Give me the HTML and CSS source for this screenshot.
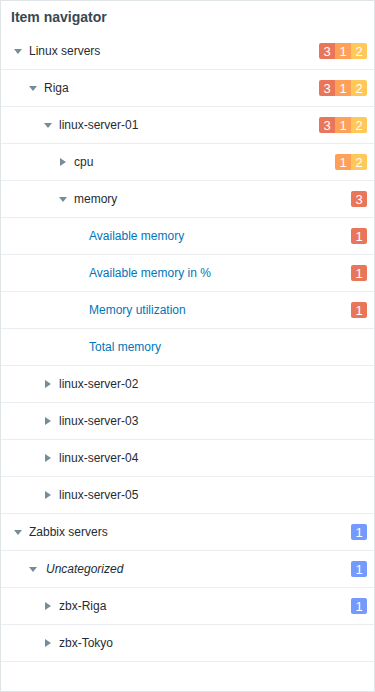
FILE: index.html
```html
<!DOCTYPE html>
<html lang="en">
<head>
  <meta charset="UTF-8">
  <title>Item navigator</title>
  <link rel="stylesheet" href="styles.css">
</head>
<body>
  <div class="widget">
    <div class="widget-head">
      <h4>Item navigator</h4>
    </div>

    <ul class="tree">
      <li class="row lvl-0"><span class="toggle open"></span><span class="name">Linux servers</span>
        <span class="problems"><span class="sev high">3</span><span class="sev average">1</span><span class="sev warning">2</span></span></li>
      <li class="row lvl-1"><span class="toggle open"></span><span class="name">Riga</span>
        <span class="problems"><span class="sev high">3</span><span class="sev average">1</span><span class="sev warning">2</span></span></li>
      <li class="row lvl-2"><span class="toggle open"></span><span class="name">linux-server-01</span>
        <span class="problems"><span class="sev high">3</span><span class="sev average">1</span><span class="sev warning">2</span></span></li>
      <li class="row lvl-3"><span class="toggle closed"></span><span class="name">cpu</span>
        <span class="problems"><span class="sev average">1</span><span class="sev warning">2</span></span></li>
      <li class="row lvl-3"><span class="toggle open"></span><span class="name">memory</span>
        <span class="problems"><span class="sev high">3</span></span></li>
      <li class="row lvl-4"><span class="toggle"></span><a class="name link" href="#">Available memory</a>
        <span class="problems"><span class="sev high">1</span></span></li>
      <li class="row lvl-4"><span class="toggle"></span><a class="name link" href="#">Available memory in %</a>
        <span class="problems"><span class="sev high">1</span></span></li>
      <li class="row lvl-4"><span class="toggle"></span><a class="name link" href="#">Memory utilization</a>
        <span class="problems"><span class="sev high">1</span></span></li>
      <li class="row lvl-4"><span class="toggle"></span><a class="name link" href="#">Total memory</a></li>
      <li class="row lvl-2"><span class="toggle closed"></span><span class="name">linux-server-02</span></li>
      <li class="row lvl-2"><span class="toggle closed"></span><span class="name">linux-server-03</span></li>
      <li class="row lvl-2"><span class="toggle closed"></span><span class="name">linux-server-04</span></li>
      <li class="row lvl-2"><span class="toggle closed"></span><span class="name">linux-server-05</span></li>
      <li class="row lvl-0"><span class="toggle open"></span><span class="name">Zabbix servers</span>
        <span class="problems"><span class="sev info">1</span></span></li>
      <li class="row lvl-1"><span class="toggle open"></span><span class="name italic">Uncategorized</span>
        <span class="problems"><span class="sev info">1</span></span></li>
      <li class="row lvl-2"><span class="toggle closed"></span><span class="name">zbx-Riga</span>
        <span class="problems"><span class="sev info">1</span></span></li>
      <li class="row lvl-2"><span class="toggle closed"></span><span class="name">zbx-Tokyo</span></li>
    </ul>
  </div>
</body>
</html>
```

FILE: styles.css
```css
body {
  margin: 0;
  background: #fff;
  color: #1f2c33;
  font-family: "Liberation Sans", Arial, sans-serif;
  font-size: 12px;
}

.widget {
  box-sizing: border-box;
  width: 375px;
  height: 692px;
  border: 1px solid #dfe4e7;
  background: #fff;
}

.widget-head {
  height: 32px;
  display: flex;
  align-items: center;
  padding-left: 10px;
}

.widget-head h4 {
  margin: 0;
  font-size: 14px;
  font-weight: bold;
  color: #384852;
}

.tree {
  list-style: none;
  margin: 0;
  padding: 0;
}

.row {
  display: flex;
  align-items: center;
  height: 36px;
  border-bottom: 1px solid #ebeef0;
  padding-right: 7px;
}

.lvl-0 { padding-left: 12px; }
.lvl-1 { padding-left: 27px; }
.lvl-2 { padding-left: 42px; }
.lvl-3 { padding-left: 57px; }
.lvl-4 { padding-left: 72px; }

.toggle {
  width: 16px;
  height: 10px;
  flex-shrink: 0;
  position: relative;
}

.toggle.open::before {
  content: "";
  position: absolute;
  left: 1px;
  top: 3px;
  border-left: 4px solid transparent;
  border-right: 4px solid transparent;
  border-top: 5px solid #768d99;
}

.toggle.closed::before {
  content: "";
  position: absolute;
  left: 2px;
  top: 1px;
  border-top: 4px solid transparent;
  border-bottom: 4px solid transparent;
  border-left: 6px solid #768d99;
}

.name {
  flex: 1;
  white-space: nowrap;
}

.italic {
  font-style: italic;
  padding-left: 2px;
}

.link {
  color: #0275b8;
  text-decoration: none;
}

.problems {
  display: flex;
  border-radius: 2px;
  overflow: hidden;
  margin-left: auto;
}

.sev {
  width: 16px;
  height: 16px;
  line-height: 17px;
  text-align: center;
  color: #fff;
  font-size: 13px;
}

.sev.high { background: #e97659; }
.sev.average { background: #ffa059; }
.sev.warning { background: #ffc859; }
.sev.info { background: #7499ff; }
```
